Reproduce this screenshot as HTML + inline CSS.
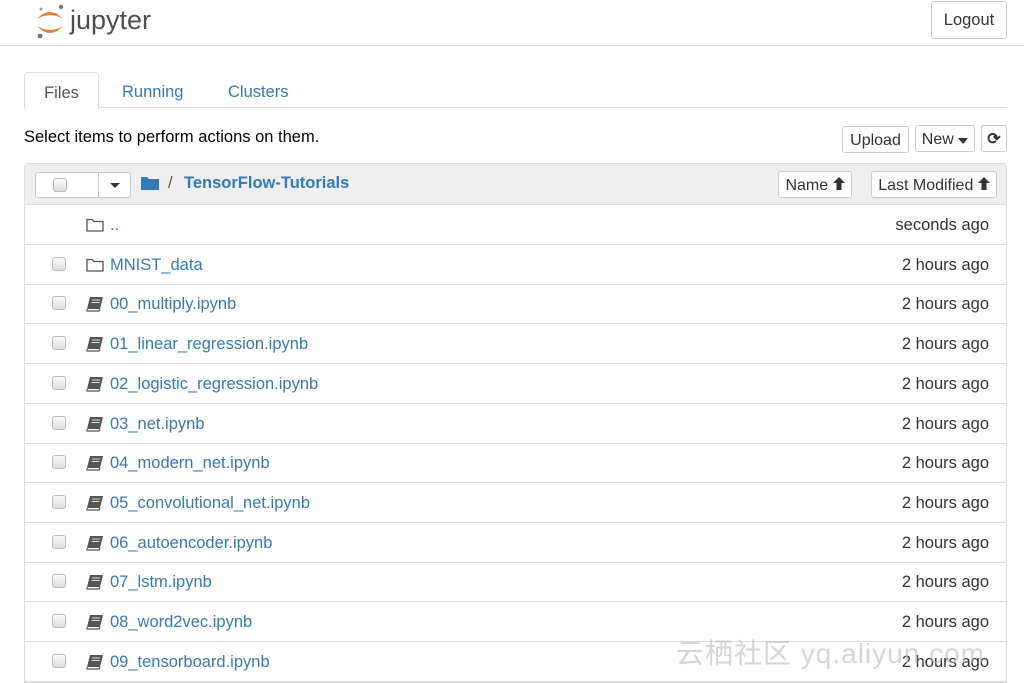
<!DOCTYPE html>
<html><head><meta charset="utf-8"><style>
*{box-sizing:border-box}
body{margin:0;width:1024px;height:676px;overflow:hidden;background:#fff;font-family:"Liberation Sans",Arial,sans-serif;color:#000;position:relative}
.hdr{position:absolute;left:0;top:0;width:1024px;height:46px;border-bottom:1px solid #e2e2e2}
.logo{position:absolute;left:34px;top:2px}
.logout{position:absolute;left:931px;top:1px;width:76px;height:38px;border:1px solid #ccc;border-radius:3px;font-size:16.5px;line-height:36px;text-align:center;color:#333}
.tabline{position:absolute;left:24px;top:107px;width:983px;height:1px;background:#ddd}
.tab{position:absolute;top:72px;height:36px;font-size:16.5px;line-height:40px;color:#337ab7}
.tab.act{left:24px;width:75px;border:1px solid #ddd;border-bottom-color:#fff;border-radius:4px 4px 0 0;color:#555;text-align:center;background:#fff;height:37px}
.sel{position:absolute;left:24px;top:128px;font-size:16.5px;color:#000}
.btn{position:absolute;top:125px;height:27px;border:1px solid #ccc;border-radius:3px;font-size:16px;line-height:27px;text-align:center;color:#333;background:#fff}
.panel{position:absolute;left:24px;top:163px;width:983px;height:520px;border:1px solid #ddd;border-radius:4px 4px 0 0}
.ph{position:absolute;left:0;top:0;width:981px;height:41px;background:#eee;border-bottom:1px solid #ddd}
.row{position:absolute;left:0;width:981px;height:40px;border-bottom:1px solid #ddd}
.cb{position:absolute;left:27px;top:12px;width:14px;height:14px;border:1px solid #bbb;border-radius:3px;background:linear-gradient(#fafafa,#ddd)}
.nm{position:absolute;left:85px;top:11px;font-size:16.5px;color:#337ab7}
.tm{position:absolute;right:17px;top:11px;font-size:16.5px;color:#333}
.ic{position:absolute;left:61px;top:12px}
.wm{position:absolute;left:676px;top:632px;font-size:28px;color:rgba(180,180,180,.55);font-family:"Liberation Sans","Noto Sans CJK SC",sans-serif;letter-spacing:1px}
</style></head><body>
<div class="hdr">
<div class="logo"><svg width="150" height="42">
<path d="M3 17 Q16 3 29 17 Q16 9 3 17Z" fill="#f37726"/>
<path d="M3 24 Q16 38 29 24 Q16 32 3 24Z" fill="#f37726"/>
<circle cx="27" cy="5" r="2.2" fill="#767677"/><circle cx="6" cy="34" r="2.4" fill="#767677"/><circle cx="7" cy="7" r="1.4" fill="#989798"/>
<text x="36" y="27" font-size="27" fill="#4e4e4e" font-family="Liberation Sans">jupyter</text></svg></div>
<div class="logout">Logout</div>
</div>
<div class="tabline"></div>
<div class="tab act">Files</div>
<div class="tab" style="left:122px">Running</div>
<div class="tab" style="left:228px">Clusters</div>
<div class="sel">Select items to perform actions on them.</div>
<div class="btn" style="left:842px;width:67px;top:126px">Upload</div>
<div class="btn" style="left:915px;width:60px">New <svg width="10" height="6"><path d="M0 0h10L5 6z" fill="#333"/></svg></div>
<div class="btn" style="left:981px;width:26px;font-weight:bold">⟳</div>
<div class="panel">
<div class="ph">
<div style="position:absolute;left:10px;top:8px;width:96px;height:26px;border:1px solid #ccc;border-radius:3px;background:#fff"><div style="position:absolute;left:62px;top:0;width:1px;height:24px;background:#ccc"></div><div class="cb" style="left:17px;top:5px"></div><div style="position:absolute;left:74px;top:10px;border-left:5px solid transparent;border-right:5px solid transparent;border-top:5px solid #333"></div></div>
<svg style="position:absolute;left:116px;top:11px" width="18" height="15"><path d="M0 2h6l2 2h10v11H0z" fill="#337ab7"/></svg>
<div style="position:absolute;left:143px;top:10px;font-size:16.5px;color:#555">/</div>
<div style="position:absolute;left:159px;top:10px;font-size:16.5px;font-weight:bold;color:#337ab7">TensorFlow-Tutorials</div>
<div class="btn" style="left:753px;top:7px;width:74px;height:27px;font-size:16px">Name <svg width="12" height="13"><path d="M6 0L12 6H8.5V13h-5V6H0z" fill="#333"/></svg></div>
<div class="btn" style="left:846px;top:7px;width:126px;height:27px;font-size:16px">Last Modified <svg width="12" height="13"><path d="M6 0L12 6H8.5V13h-5V6H0z" fill="#333"/></svg></div>
</div>
<div id="rows"></div>
</div>
<div class="wm">云栖社区 yq.aliyun.com</div>
<script>
var f=[["..","seconds ago",0],["MNIST_data","2 hours ago",1],["00_multiply.ipynb"],["01_linear_regression.ipynb"],["02_logistic_regression.ipynb"],["03_net.ipynb"],["04_modern_net.ipynb"],["05_convolutional_net.ipynb"],["06_autoencoder.ipynb"],["07_lstm.ipynb"],["08_word2vec.ipynb"],["09_tensorboard.ipynb"]];
var h="";f.forEach(function(r,i){var top=41+i*39.7;var folder=i<2;
var ic=folder?'<svg class="ic" width="18" height="15"><path d="M1 2.5h5l2 2h9v9.5H1z" fill="none" stroke="#555" stroke-width="1.3"/></svg>':'<svg class="ic" width="18" height="16"><path d="M4 1h13l-3 12H1z" fill="#555"/><path d="M1 13l0 2h12l1-2" fill="none" stroke="#555" stroke-width="1.2"/><path d="M6 4h8M5.5 6.5h8" stroke="#ddd" stroke-width="1"/></svg>';
h+='<div class="row" style="top:'+top+'px">'+(i>0?'<div class="cb"></div>':'')+ic+'<div class="nm">'+r[0]+'</div><div class="tm">'+(r[1]||"2 hours ago")+'</div></div>';});
document.getElementById("rows").innerHTML=h;
</script>
</body></html>
